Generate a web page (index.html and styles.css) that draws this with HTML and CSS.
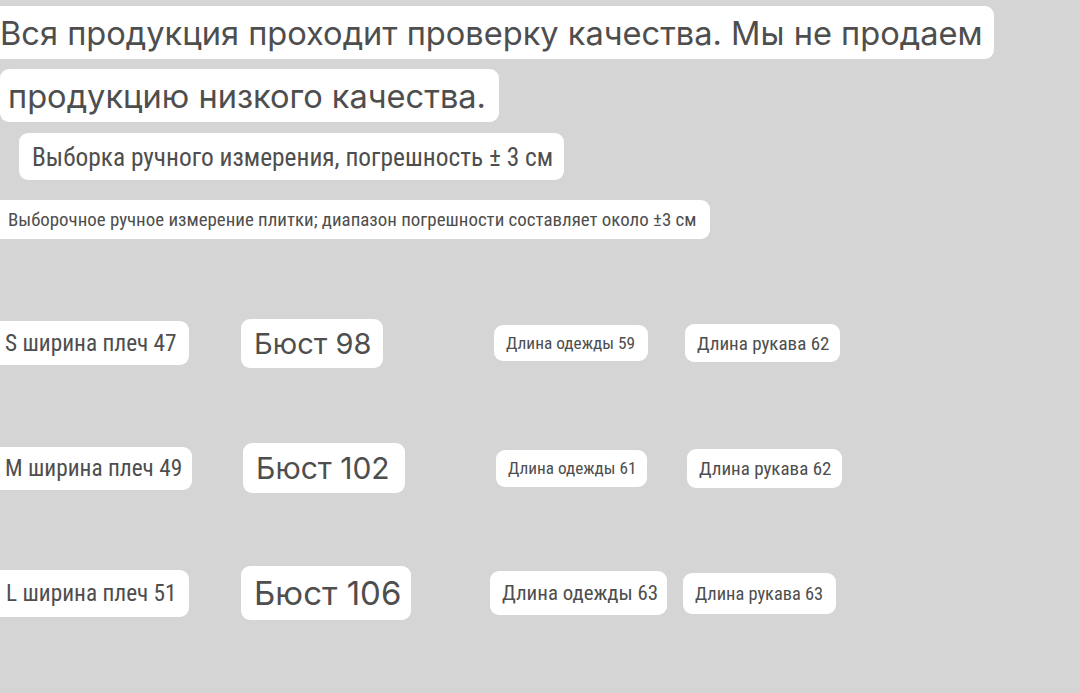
FILE: index.html
```html
<!DOCTYPE html>
<html lang="ru">
<head>
<meta charset="utf-8">
<title>Размеры</title>
<link rel="stylesheet" href="styles.css">
</head>
<body>
<main class="page">
  <div class="pill head head-1">Вся продукция проходит проверку качества. Мы не продаем</div>
  <div class="pill head head-2">продукцию низкого качества.</div>
  <div class="pill note note-1">Выборка ручного измерения, погрешность ± 3 см</div>
  <div class="pill note note-2">Выборочное ручное измерение плитки; диапазон погрешности составляет около ±3 см</div>

  <section class="table">
    <div class="pill cell shoulder s1">S ширина плеч 47</div>
    <div class="pill cell bust b1">Бюст 98</div>
    <div class="pill cell len l1">Длина одежды 59</div>
    <div class="pill cell len r1">Длина рукава 62</div>

    <div class="pill cell shoulder s2">M ширина плеч 49</div>
    <div class="pill cell bust b2">Бюст 102</div>
    <div class="pill cell len l2">Длина одежды 61</div>
    <div class="pill cell len r2">Длина рукава 62</div>

    <div class="pill cell shoulder s3">L ширина плеч 51</div>
    <div class="pill cell bust b3">Бюст 106</div>
    <div class="pill cell len l3">Длина одежды 63</div>
    <div class="pill cell len r3">Длина рукава 63</div>
  </section>
</main>
</body>
</html>
```

FILE: styles.css
```css
html, body {
  margin: 0;
  padding: 0;
}

body {
  width: 1080px;
  height: 693px;
  overflow: hidden;
  background: #d5d5d5;
  color: #4e4e4e;
  font-family: "Inter", "Roboto", "Liberation Sans", sans-serif;
}

.page {
  display: flex;
  flex-direction: column;
  align-items: flex-start;
  padding-top: 6px;
}

.pill {
  background: #ffffff;
  border-radius: 9px;
  display: flex;
  align-items: center;
  box-sizing: border-box;
  white-space: nowrap;
}

.head {
  font-size: 32.6px;
  height: 53px;
}

.head-1 {
  margin-left: -12px;
  padding-left: 12px;
  width: 1006px;
}

.head-2 {
  margin-top: 10px;
  width: 499px;
  padding-left: 8px;
}

.note,
.cell.shoulder,
.cell.len {
  font-family: "Roboto Condensed", "DejaVu Sans Condensed", "Roboto", sans-serif;
}

.note-1 {
  margin-top: 11px;
  margin-left: 19px;
  height: 47px;
  width: 545px;
  padding-left: 13px;
  font-size: 25.4px;
}

.note-2 {
  margin-top: 20px;
  margin-left: -10px;
  height: 39px;
  width: 720px;
  padding-left: 18px;
  font-size: 18.9px;
}

.table {
  display: grid;
  grid-template-columns: 241px 249px 193px auto;
  grid-auto-rows: 56px;
  row-gap: 69px;
  align-items: center;
  justify-items: start;
  margin-top: 76px;
}

.cell.shoulder {
  font-size: 23.3px;
  margin-left: -10px;
  padding-left: 15px;
}

.cell.bust {
  font-family: "Inter", "Roboto", sans-serif;
  font-size: 29px;
  padding-left: 13px;
}

.cell.len {
  font-size: 19px;
  padding-left: 12px;
}

.cell.s1 { width: 199px; height: 44px; }
.cell.s2 { width: 202px; height: 43px; }
.cell.s3 { width: 199px; height: 47px; padding-left: 16px; }

.cell.b1 { width: 142px; height: 49px; }
.cell.b2 { width: 162px; height: 50px; margin-left: 2px; font-size: 30px; }
.cell.b3 { width: 170px; height: 54px; font-size: 33px; }

.cell.l1 { width: 154px; height: 36px; margin-left: 4px; font-size: 17.3px; }
.cell.l2 { width: 151px; height: 37px; margin-left: 6px; font-size: 17.2px; }
.cell.l3 { width: 177px; height: 44px; font-size: 20.9px; }

.cell.r1 { width: 155px; height: 38px; margin-left: 2px; }
.cell.r2 { width: 155px; height: 39px; margin-left: 4px; }
.cell.r3 { width: 153px; height: 41px; font-size: 18.4px; }
```
